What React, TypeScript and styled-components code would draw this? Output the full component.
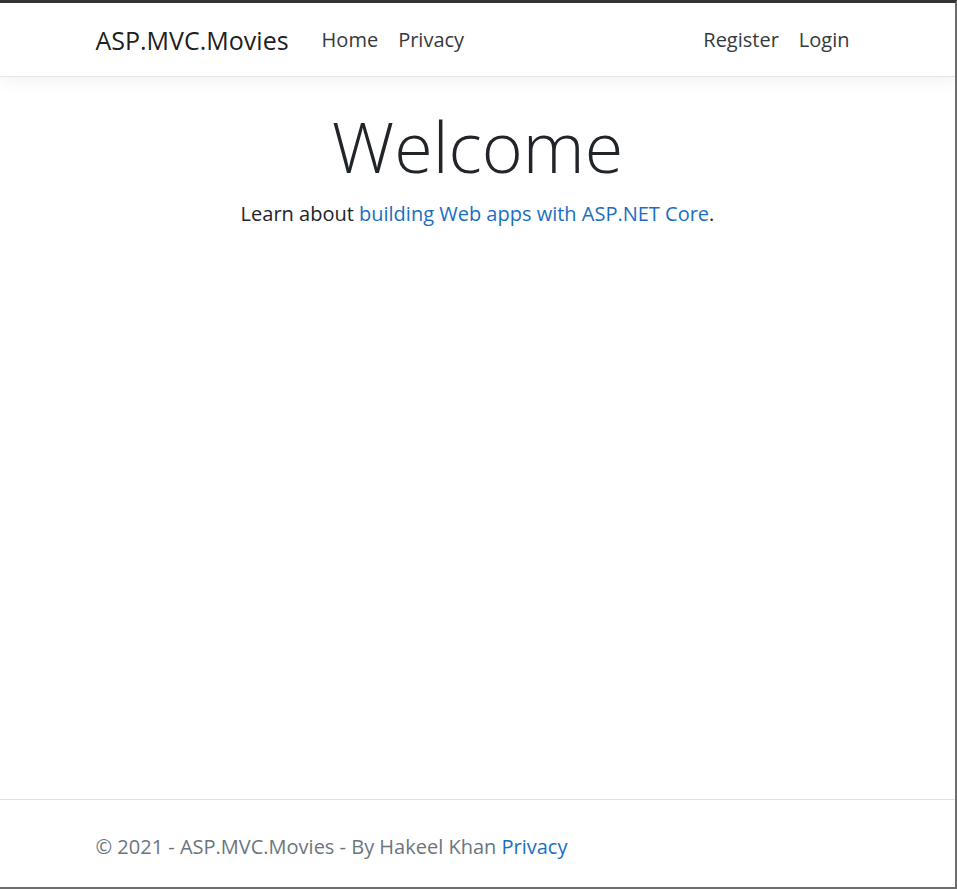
import React from "react";
import styled, { createGlobalStyle } from "styled-components";

const GlobalStyle = createGlobalStyle`
  html, body { margin: 0; padding: 0; background: #ffffff; }
  body {
    font-family: "Segoe UI", "Open Sans", "Noto Sans", Arial, sans-serif;
    font-size: 20px;
    color: #212529;
  }
  * { box-sizing: border-box; }
`;

const Frame = styled.div`
  height: 889px;
  border-top: 3px solid #343434;
  border-right: 2px solid #6e6e6e;
  border-bottom: 2px solid #6e6e6e;
  display: flex;
  flex-direction: column;
  background: #fff;
`;

const Header = styled.header`
  position: relative;
  z-index: 1;
  background: #fff;
  border-bottom: 1px solid #e5e5e5;
  box-shadow: 0 5px 15px rgba(0, 0, 0, 0.05);
`;

const Container = styled.div`
  width: 764px;
  margin: 0 auto;
`;

const NavBar = styled(Container)`
  height: 73px;
  display: flex;
  align-items: center;
`;

const Brand = styled.a`
  font-size: 25px;
  color: rgba(0, 0, 0, 0.9);
  text-decoration: none;
  margin-right: 23px;
  white-space: nowrap;
`;

const NavList = styled.nav<{ $grow?: boolean }>`
  display: flex;
  align-items: center;
  flex-grow: ${(p) => (p.$grow ? 1 : 0)};
`;

const NavLink = styled.a`
  font-size: 20px;
  color: #343a40;
  text-decoration: none;
  padding: 0 10px;
`;

const Main = styled.main`
  flex: 1;
  padding-top: 27px;
  text-align: center;
`;

const Title = styled.h1`
  margin: 0 0 11px;
  font-size: 70px;
  font-weight: 300;
  line-height: 1.2;
  color: #212529;
`;

const Lead = styled.p`
  margin: 0;
  font-size: 20px;
  line-height: 1.5;
  color: #212529;
`;

const Link = styled.a`
  color: #1b6ec2;
  text-decoration: none;
`;

const Footer = styled.footer`
  border-top: 1px solid #dee2e6;
  padding: 9px 0 3px;
  line-height: 75px;
  font-size: 20px;
  color: #6c757d;
  white-space: nowrap;
`;

export default function App() {
  return (
    <>
      <GlobalStyle />
      <Frame>
        <Header>
          <NavBar>
            <Brand href="#">ASP.MVC.Movies</Brand>
            <NavList $grow>
              <NavLink href="#">Home</NavLink>
              <NavLink href="#">Privacy</NavLink>
            </NavList>
            <NavList>
              <NavLink href="#">Register</NavLink>
              <NavLink href="#">Login</NavLink>
            </NavList>
          </NavBar>
        </Header>
        <Main>
          <Title>Welcome</Title>
          <Lead>
            Learn about <Link href="#">building Web apps with ASP.NET Core</Link>.
          </Lead>
        </Main>
        <Footer>
          <Container>
            © 2021 - ASP.MVC.Movies - By Hakeel Khan <Link href="#">Privacy</Link>
          </Container>
        </Footer>
      </Frame>
    </>
  );
}
